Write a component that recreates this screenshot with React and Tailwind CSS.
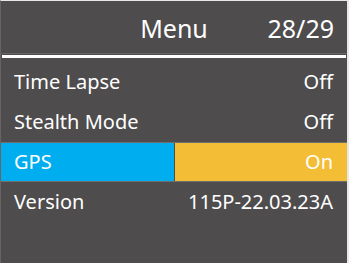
export default function App() {
  const font = { fontFamily: '"Noto Sans", "Open Sans", sans-serif' };

  return (
    <div
      className="w-[349px] h-[263px] bg-[#4e4c4d] border-t border-t-[#e8e8e8] border-r-2 border-r-[#e8e8e8] border-l border-l-[#666465] text-white overflow-hidden"
      style={font}
    >
      <div className="grid grid-cols-3 items-center h-[52px] text-[25px] leading-none">
        <div />
        <div className="text-center pt-[2px]">Menu</div>
        <div className="text-right pr-[13px] pt-[2px]">28/29</div>
      </div>
      <div className="h-px bg-[#656364]" />
      <div className="h-px" />
      <div className="mx-[1px] h-[3px] bg-white" />

      <div className="mt-[4px]">
        <div className="h-[40px] flex items-center justify-between pl-[13px] pr-[14px] text-[20px]">
          <span>Time Lapse</span>
          <span>Off</span>
        </div>
        <div className="h-[40px] flex items-center justify-between pl-[13px] pr-[14px] text-[20px]">
          <span>Stealth Mode</span>
          <span>Off</span>
        </div>
        <div className="h-[40px] flex border-y border-[#6f6d6e] text-[20px]">
          <div className="w-[173px] bg-[#00aeef] flex items-center pl-[13px]">GPS</div>
          <div className="w-px" />
          <div className="flex-1 bg-[#f3bd35] flex items-center justify-end pr-[14px]">On</div>
        </div>
        <div className="h-[40px] flex items-center justify-between pl-[13px] pr-[14px] text-[20px]">
          <span>Version</span>
          <span>115P-22.03.23A</span>
        </div>
      </div>
    </div>
  );
}
